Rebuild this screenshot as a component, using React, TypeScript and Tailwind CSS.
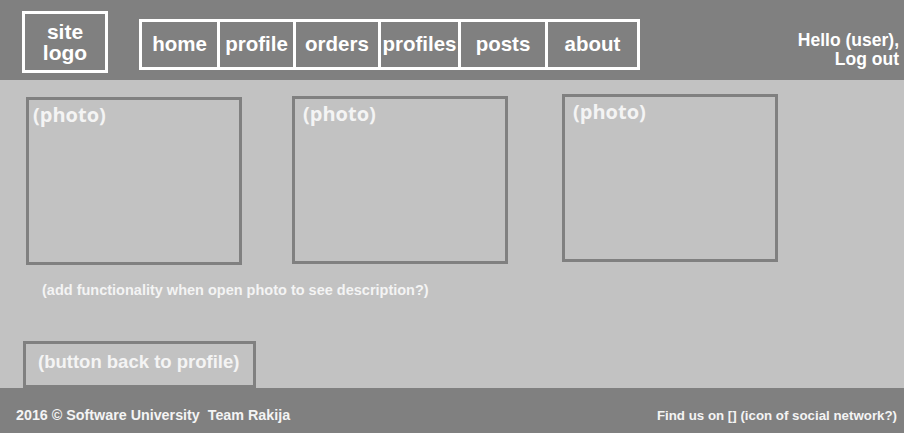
const navItems = [
  { label: 'home', w: 'w-[75px]' },
  { label: 'profile', w: 'w-[76px]' },
  { label: 'orders', w: 'w-[85px]' },
  { label: 'profiles', w: 'w-[80px]' },
  { label: 'posts', w: 'w-[87px]' },
  { label: 'about', w: 'w-[92px]' },
]

function PhotoBox({ className }: { className: string }) {
  return (
    <div
      className={`h-[168px] w-[216px] shrink-0 border-[3px] border-[#808080] pt-[3px] ${className}`}
    >
      <span className="font-['Open_Sans',sans-serif] text-[20px] font-bold leading-[24px] text-[#f4f4f4]">
        (photo)
      </span>
    </div>
  )
}

export default function App() {
  return (
    <div className="flex h-[433px] w-[904px] flex-col font-['Liberation_Sans',Arial,sans-serif] font-bold text-white">
      {/* Header */}
      <header className="flex h-[80px] shrink-0 items-start bg-[#808080]">
        <div className="ml-[22px] mt-[11px] flex h-[62px] w-[86px] flex-col items-center justify-center border-[3px] border-white text-[21px] leading-[21px]">
          <span>site</span>
          <span>logo</span>
        </div>

        <nav className="ml-[31px] mt-[19px] flex h-[51px] border-[3px] border-white">
          {navItems.map((item, i) => (
            <div
              key={item.label}
              className={`flex items-center justify-center text-[20.5px] ${item.w} ${i > 0 ? 'border-l-[3px] border-white' : ''}`}
            >
              {item.label}
            </div>
          ))}
        </nav>

        <div className="ml-auto mr-[5px] mt-[31px] text-right text-[17.5px] leading-[19px]">
          <p>Hello (user),</p>
          <p>Log out</p>
        </div>
      </header>

      {/* Content */}
      <main className="flex flex-1 flex-col bg-[#c2c2c2]">
        <div className="flex items-start pl-[26px]">
          <PhotoBox className="mt-[17px] pl-[4px]" />
          <PhotoBox className="ml-[50px] mt-[16px] pl-[8px]" />
          <PhotoBox className="ml-[54px] mt-[14px] pl-[8px]" />
        </div>

        <p className="ml-[42px] mt-[17px] text-[14.5px] leading-[17px] text-[#f4f4f4]">
          (add functionality when open photo to see description?)
        </p>

        <button
          type="button"
          className="ml-[23px] mt-auto flex h-[47px] w-[233px] items-start border-[3px] border-[#808080] pl-[12px] pt-[4px] text-left text-[18.5px] font-bold text-[#f4f4f4]"
        >
          (button back to profile)
        </button>
      </main>

      {/* Footer */}
      <footer className="flex h-[45px] shrink-0 items-center justify-between bg-[#808080] pl-[16px] pr-[7px] pt-[10px] text-[#f4f4f4]">
        <span className="text-[14.3px]">2016 © Software University &nbsp;Team Rakija</span>
        <span className="text-[13.3px]">Find us on [] (icon of social network?)</span>
      </footer>
    </div>
  )
}
